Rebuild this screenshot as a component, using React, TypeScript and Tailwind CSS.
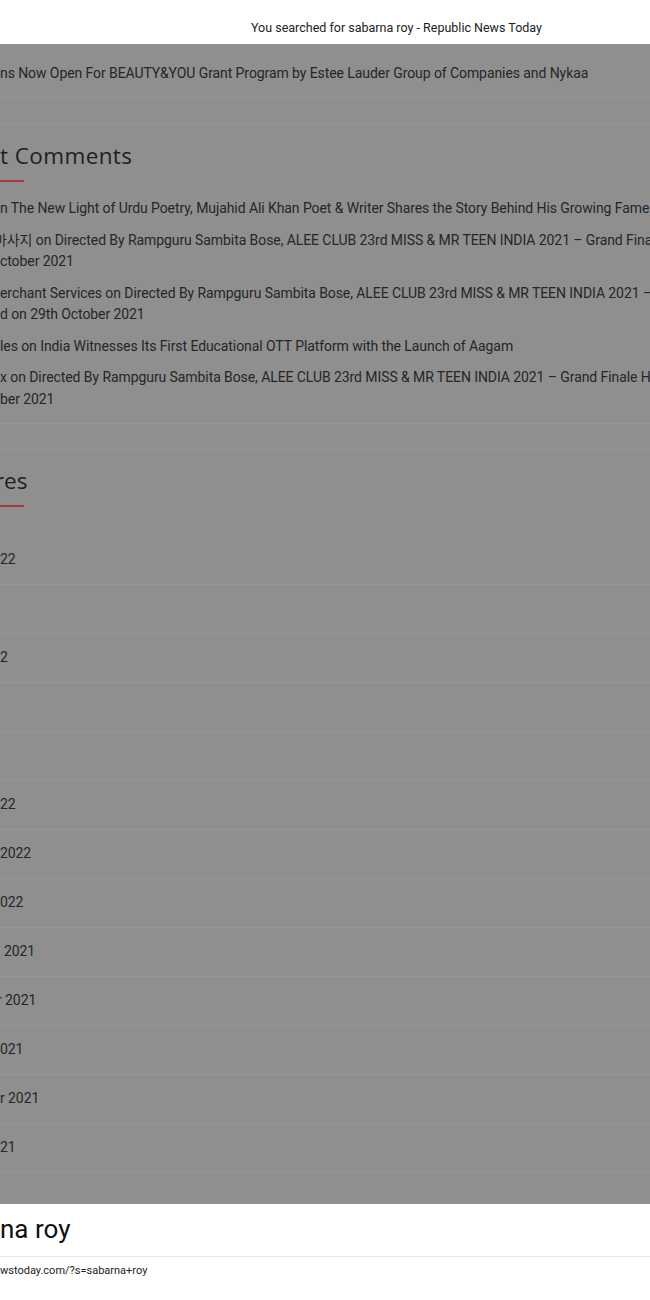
import React from "react";

const comments: string[][] = [
  ["n The New Light of Urdu Poetry, Mujahid Ali Khan Poet & Writer Shares the Story Behind His Growing Fame"],
  ["마사지 on Directed By Rampguru Sambita Bose, ALEE CLUB 23rd MISS & MR TEEN INDIA 2021 – Grand Finale Held on 29th", "ctober 2021"],
  ["erchant Services on Directed By Rampguru Sambita Bose, ALEE CLUB 23rd MISS & MR TEEN INDIA 2021 – Grand Finale", "d on 29th October 2021"],
  ["les on India Witnesses Its First Educational OTT Platform with the Launch of Aagam"],
  ["x on Directed By Rampguru Sambita Bose, ALEE CLUB 23rd MISS & MR TEEN INDIA 2021 – Grand Finale Held on 29th", "ber 2021"],
];

const archives: string[] = [
  "22", "", "2", "", "", "22", "2022", "022", "2021", "r 2021", "021", "r 2021", "21",
];

const App: React.FC = () => {
  return (
    <div className="w-[650px] h-[1300px] overflow-hidden bg-white font-['Roboto',sans-serif]">
      <div className="h-[44px] flex items-end pb-[6px] pl-[251px]">
        <p className="text-[12.5px] text-[#222] whitespace-nowrap">You searched for sabarna roy - Republic News Today</p>
      </div>

      <div className="bg-[#8f8f8f] h-[1160px] overflow-hidden text-[#262626] tracking-[-0.08px]">
        <div className="h-[54px] flex items-center pt-[5px] border-b border-[#979797]">
          <p className="text-[14px] whitespace-nowrap">ns Now Open For BEAUTY&amp;YOU Grant Program by Estee Lauder Group of Companies and Nykaa</p>
        </div>
        <div className="h-[26px] border-b border-[#979797]"></div>

        <div className="pt-[17px]">
          <h2 className="text-[22.5px] leading-[30px] tracking-[0.4px] whitespace-nowrap font-['Open_Sans',sans-serif] text-[#1f1f1f]">t Comments</h2>
          <div className="mt-[9px] w-[24px] h-[2px] bg-[#a83a3a]"></div>
          <ul className="mt-[16px] flex flex-col gap-[10px] text-[14px] leading-[21.5px]">
            {comments.map((lines, i) => (
              <li key={i} className="overflow-hidden">
                {lines.map((l, j) => (
                  <p key={j} className={"whitespace-nowrap " + (i === 1 && j === 0 ? "-ml-[6px] font-['Roboto','Noto_Sans_CJK_KR',sans-serif]" : "")}>{l}</p>
                ))}
              </li>
            ))}
          </ul>
          <div className="mt-[13px] h-[1px] bg-[#979797]"></div>
          <div className="h-[26px] border-b border-[#979797]"></div>
        </div>

        <div className="pt-[16px]">
          <h2 className="-ml-[5px] text-[22.5px] leading-[30px] whitespace-nowrap font-['Open_Sans',sans-serif] text-[#1f1f1f]">res</h2>
          <div className="mt-[9px] w-[24px] h-[2px] bg-[#a83a3a]"></div>
          <ul className="mt-[29px] flex flex-col">
            {archives.map((a, i) => (
              <li key={i} className="h-[49px] flex items-start pt-[13px] border-b border-[#979797] text-[14px] leading-[20px] whitespace-nowrap">
                <span className={i === 8 ? "ml-[4px]" : i === 9 ? "-ml-[3px]" : ""}>{a}</span>
              </li>
            ))}
          </ul>
        </div>
      </div>

      <div className="pt-[8px]">
        <h1 className="text-[26px] leading-[34px] text-[#111] whitespace-nowrap">na roy</h1>
        <div className="mt-[10px] h-[1px] bg-[#e5e5e5]"></div>
        <p className="mt-[6px] text-[11px] text-[#222] whitespace-nowrap">wstoday.com/?s=sabarna+roy</p>
      </div>
    </div>
  );
};

export default App;
